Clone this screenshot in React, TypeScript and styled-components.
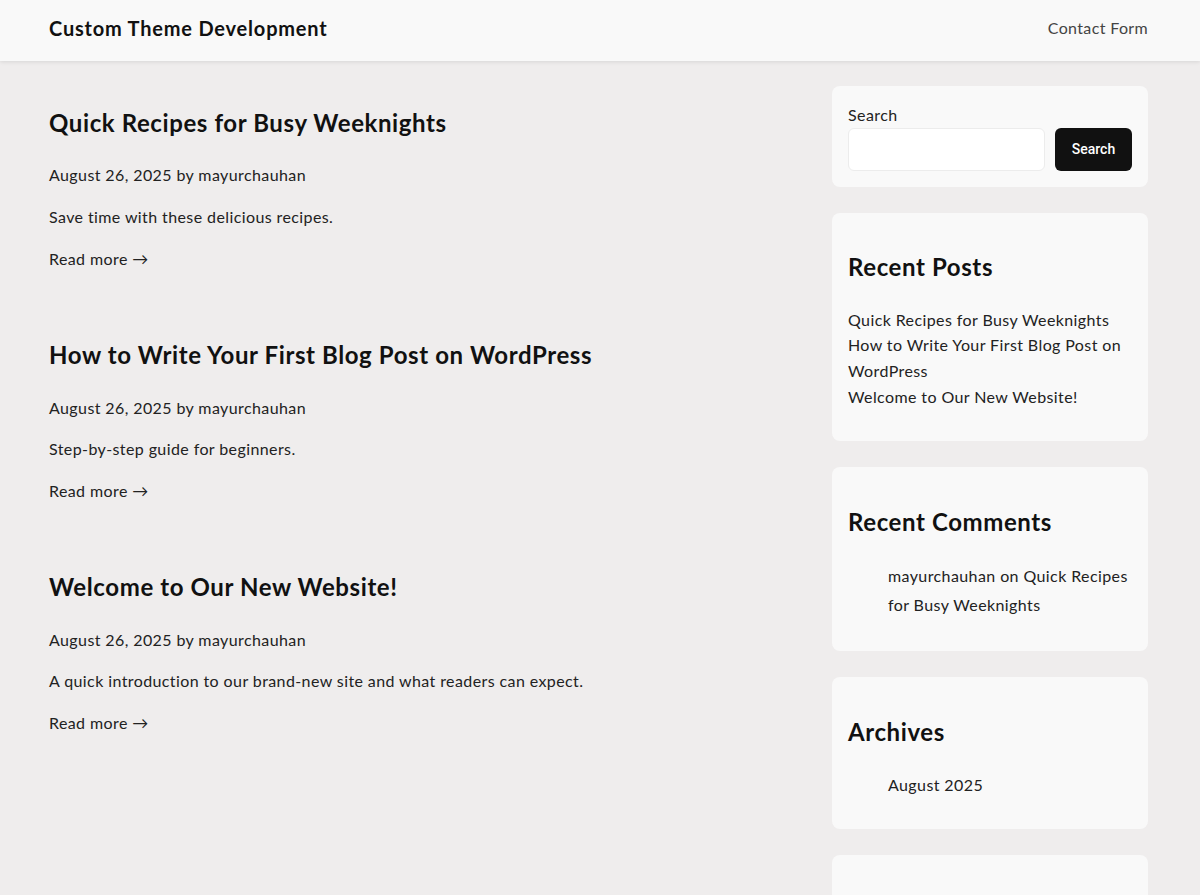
import React from "react";
import styled, { createGlobalStyle } from "styled-components";

const Global = createGlobalStyle`
  html { overflow: hidden; }
  body {
    margin: 0;
    background: #efeded;
    font-family: "Lato", "Noto Sans", sans-serif;
    font-size: 16px;
    line-height: 1.6;
    letter-spacing: 0.4px;
    color: #222;
  }
  * { box-sizing: border-box; }
  a { color: inherit; text-decoration: none; }
`;

const Header = styled.header`
  height: 61px;
  background: #f9f9f9;
  box-shadow: 0 1px 4px rgba(0, 0, 0, 0.1);
  display: flex;
  align-items: center;
  justify-content: space-between;
  padding: 0 52px 5px 49px;
  position: relative;
  z-index: 1;
`;

const SiteTitle = styled.a`
  font-size: 20px;
  font-weight: 700;
  color: #111;
  letter-spacing: 0.8px;
`;

const NavLink = styled.a`
  font-size: 16px;
  color: #444;
  letter-spacing: 0.35px;
`;

const Layout = styled.div`
  display: grid;
  grid-template-columns: 1fr 316px;
  gap: 40px;
  padding: 25px 52px 0 49px;
`;

const Main = styled.main`
  display: flex;
  flex-direction: column;
  gap: 65px;
  padding-top: 18px;
`;

const Article = styled.article`
  display: flex;
  flex-direction: column;
`;

const PostTitle = styled.h2`
  margin: 0 0 20px;
  font-size: 24px;
  font-weight: 700;
  line-height: 38.4px;
  color: #111;
  letter-spacing: 0.6px;
`;

const Para = styled.p`
  margin: 0 0 16px;
  line-height: 25.6px;
  &:last-child { margin-bottom: 0; }
`;

const Sidebar = styled.aside`
  display: flex;
  flex-direction: column;
  gap: 26px;
`;

const Card = styled.section<{ $empty?: boolean }>`
  background: #f9f9f9;
  border-radius: 8px;
  padding: 16px;
  min-height: ${(p) => (p.$empty ? "80px" : "auto")};
`;

const Label = styled.label`
  display: block;
  line-height: 25.6px;
  color: #222;
`;

const SearchRow = styled.div`
  display: flex;
  gap: 10px;
`;

const Input = styled.input`
  flex: 1;
  height: 43px;
  border: 1px solid #ececec;
  border-radius: 6px;
  background: #fff;
  min-width: 0;
`;

const Button = styled.button`
  width: 77px;
  height: 43px;
  border: none;
  border-radius: 6px;
  background: #111;
  color: #fff;
  font-family: "Roboto", "Liberation Sans", sans-serif;
  font-size: 14px;
  font-weight: 500;
  letter-spacing: 0;
`;

const WidgetTitle = styled.h2`
  margin: 19.9px 0;
  font-size: 24px;
  font-weight: 700;
  line-height: 38.4px;
  color: #111;
  letter-spacing: 0.6px;
`;

const List = styled.ul<{ $indent?: boolean; $lh?: number; $mb?: number }>`
  list-style: none;
  margin: 0 0 ${(p) => p.$mb ?? 16}px;
  padding-left: ${(p) => (p.$indent ? "40px" : "0")};
  line-height: ${(p) => p.$lh ?? 25.6}px;
`;

const posts = [
  { title: "Quick Recipes for Busy Weeknights", excerpt: "Save time with these delicious recipes." },
  { title: "How to Write Your First Blog Post on WordPress", excerpt: "Step-by-step guide for beginners." },
  { title: "Welcome to Our New Website!", excerpt: "A quick introduction to our brand-new site and what readers can expect." },
];

export default function App() {
  return (
    <>
      <Global />
      <Header>
        <SiteTitle href="#">Custom Theme Development</SiteTitle>
        <NavLink href="#">Contact Form</NavLink>
      </Header>
      <Layout>
        <Main>
          {posts.map((p) => (
            <Article key={p.title}>
              <PostTitle>{p.title}</PostTitle>
              <Para>August 26, 2025 by mayurchauhan</Para>
              <Para>{p.excerpt}</Para>
              <Para><a href="#">Read more →</a></Para>
            </Article>
          ))}
        </Main>
        <Sidebar>
          <Card>
            <Label>Search</Label>
            <SearchRow>
              <Input type="text" />
              <Button>Search</Button>
            </SearchRow>
          </Card>
          <Card>
            <WidgetTitle>Recent Posts</WidgetTitle>
            <List>
              {posts.map((p) => (
                <li key={p.title}><a href="#">{p.title}</a></li>
              ))}
            </List>
          </Card>
          <Card>
            <WidgetTitle>Recent Comments</WidgetTitle>
            <List $indent $lh={29}>
              <li>mayurchauhan on <a href="#">Quick Recipes for Busy Weeknights</a></li>
            </List>
          </Card>
          <Card>
            <WidgetTitle>Archives</WidgetTitle>
            <List $indent $lh={26} $mb={15}>
              <li><a href="#">August 2025</a></li>
            </List>
          </Card>
          <Card $empty />
        </Sidebar>
      </Layout>
    </>
  );
}
